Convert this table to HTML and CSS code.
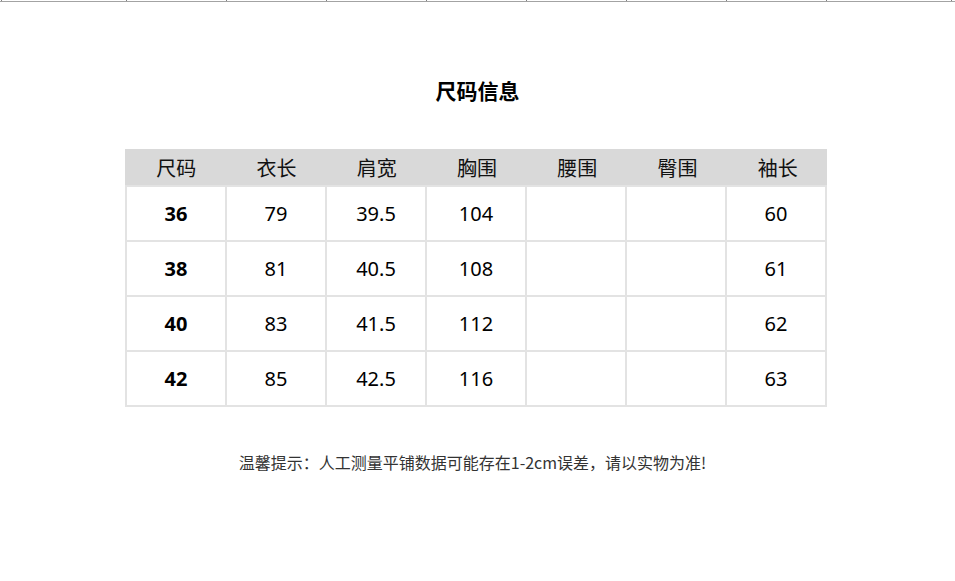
FILE: index.html
```html
<!DOCTYPE html>
<html lang="zh">
<head>
<meta charset="utf-8">
<title>尺码信息</title>
<link rel="stylesheet" href="styles.css">
</head>
<body>
<div class="ruler">
  <span class="tick t2"></span><span class="tick t125"></span><span class="tick"></span><span class="tick"></span><span class="tick"></span><span class="tick"></span><span class="tick"></span><span class="tick"></span><span class="tick"></span><span class="tick t125"></span>
</div>
<h1 class="title">尺码信息</h1>
<div class="size-table">
  <div class="head">
    <div>尺码</div><div>衣长</div><div>肩宽</div><div>胸围</div><div>腰围</div><div>臀围</div><div>袖长</div>
  </div>
  <div class="body">
    <div class="c size">36</div><div class="c">79</div><div class="c">39.5</div><div class="c">104</div><div class="c"></div><div class="c"></div><div class="c">60</div>
    <div class="c size">38</div><div class="c">81</div><div class="c">40.5</div><div class="c">108</div><div class="c"></div><div class="c"></div><div class="c">61</div>
    <div class="c size">40</div><div class="c">83</div><div class="c">41.5</div><div class="c">112</div><div class="c"></div><div class="c"></div><div class="c">62</div>
    <div class="c size">42</div><div class="c">85</div><div class="c">42.5</div><div class="c">116</div><div class="c"></div><div class="c"></div><div class="c">63</div>
  </div>
</div>
<p class="note">温馨提示：人工测量平铺数据可能存在1-2cm误差，请以实物为准!</p>
</body>
</html>
```
FILE: styles.css
```css
* { box-sizing: border-box; }
html, body { margin: 0; padding: 0; background: #fff; }
body {
  width: 955px;
  font-family: "Noto Sans", "Noto Sans CJK SC", sans-serif;
  color: #000;
}
.ruler {
  display: flex;
  height: 2px;
  border-bottom: 1px solid #a3a3a3;
}
.tick {
  width: 100px;
  height: 1px;
  border-right: 1px solid #7f7f7f;
  flex: none;
}
.tick.t2 { width: 2px; }
.tick.t125 { width: 125px; }
.title {
  margin: 73px 0 0;
  height: 31px;
  line-height: 31px;
  text-align: center;
  font-size: 21px;
  font-weight: bold;
  font-family: "Noto Sans CJK SC", sans-serif;
}
.size-table {
  width: 702px;
  margin: 43px 0 0 125px;
}
.head {
  display: grid;
  grid-template-columns: repeat(7, 1fr);
  height: 36px;
  background: #d9d9d9;
}
.head div {
  display: flex;
  align-items: center;
  justify-content: center;
  font-size: 20px;
  font-family: "Noto Sans CJK SC", sans-serif;
  color: #111;
  padding-left: 2px;
}
.body {
  display: grid;
  grid-template-columns: repeat(7, 100px);
  border-top: 2px solid #e3e3e3;
  border-left: 2px solid #e3e3e3;
}
.c {
  height: 55px;
  border-right: 2px solid #e3e3e3;
  border-bottom: 2px solid #e3e3e3;
  display: flex;
  align-items: center;
  justify-content: center;
  font-size: 20px;
  padding-bottom: 1px;
}
.c.size { font-weight: bold; }
.note {
  margin: 43px 0 0;
  text-align: center;
  font-size: 16px;
  line-height: 24px;
  color: #333;
  font-family: "Noto Sans CJK SC", sans-serif;
  padding-right: 10px;
}
```
